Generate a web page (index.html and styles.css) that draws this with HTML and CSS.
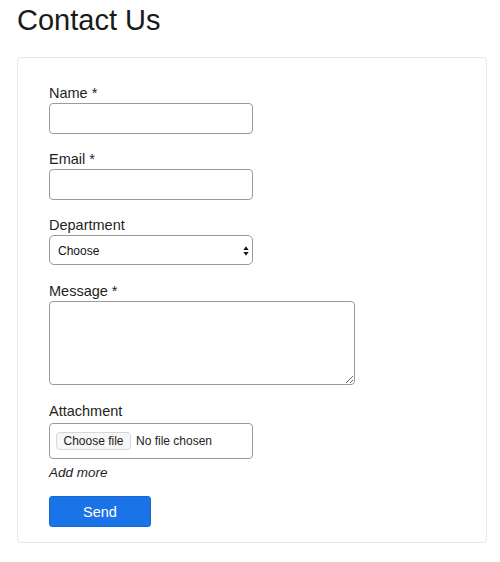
FILE: index.html
```html
<!DOCTYPE html>
<html lang="en">
<head>
<meta charset="utf-8">
<title>Contact Us</title>
<link rel="stylesheet" href="styles.css">
</head>
<body>
<h1 class="title">Contact Us</h1>
<form class="card">
  <div class="group">
    <label class="label" for="name">Name *</label>
    <input class="field" id="name" type="text">
  </div>
  <div class="group">
    <label class="label" for="email">Email *</label>
    <input class="field" id="email" type="email">
  </div>
  <div class="group group-select">
    <label class="label" for="dept">Department</label>
    <div class="select-wrap">
      <select class="select" id="dept">
        <option>Choose</option>
      </select>
      <svg class="select-arrows" width="6" height="10" viewBox="0 0 6 10">
        <path d="M3 0.3 L5.6 4 L0.4 4 Z" fill="#111"/>
        <path d="M3 9.7 L5.6 6 L0.4 6 Z" fill="#111"/>
      </svg>
    </div>
  </div>
  <div class="group group-message">
    <label class="label" for="msg">Message *</label>
    <textarea class="textarea" id="msg"></textarea>
  </div>
  <div class="group group-file">
    <span class="label">Attachment</span>
    <div class="file">
      <span class="file-btn">Choose file</span>
      <span class="file-text">No file chosen</span>
    </div>
    <div class="add-more">Add more</div>
  </div>
  <button class="send" type="button">Send</button>
</form>
</body>
</html>
```
FILE: styles.css
```css
html, body {
  background: #fff;
}
body {
  margin: 0;
  padding: 0 14px 0 17px;
  font-family: "Liberation Sans", Arial, Helvetica, sans-serif;
  color: #1e1e1e;
}
.title {
  margin: 0 0 17px 0;
  font-size: 29px;
  font-weight: normal;
  line-height: 40px;
  color: #1a1a1a;
}
.card {
  box-sizing: border-box;
  width: 470px;
  border: 1px solid #e8e8e8;
  border-radius: 4px;
  padding: 26px 30px 15px 31px;
  display: flex;
  flex-direction: column;
  align-items: flex-start;
}
.group {
  display: flex;
  flex-direction: column;
  align-items: flex-start;
  margin-bottom: 16px;
}
.group-select,
.group-message {
  margin-bottom: 17px;
}
.group-file {
  margin-bottom: 14px;
}
.label {
  display: block;
  font-size: 14.5px;
  line-height: 18px;
  margin-bottom: 1px;
  color: #1e1e1e;
}
.field {
  box-sizing: border-box;
  width: 204px;
  height: 31px;
  margin: 0;
  border: 1px solid #9a9a9a;
  border-radius: 4px;
  background: #fff;
  padding: 0 8px;
  font-family: inherit;
  font-size: 12px;
}
.select-wrap {
  position: relative;
  width: 204px;
  height: 30px;
}
.select {
  box-sizing: border-box;
  width: 204px;
  height: 30px;
  margin: 0;
  -webkit-appearance: none;
  appearance: none;
  border: 1px solid #9a9a9a;
  border-radius: 5px;
  background: #fff;
  padding: 2px 20px 0 8px;
  font-family: inherit;
  font-size: 12px;
  color: #111;
}
.select-arrows {
  position: absolute;
  right: 4px;
  top: 11px;
}
.textarea {
  display: block;
  box-sizing: border-box;
  width: 306px;
  height: 84px;
  margin: 0;
  border: 1px solid #9a9a9a;
  border-radius: 4px;
  background: #fff;
  resize: both;
  font-family: inherit;
  font-size: 12px;
}
.file {
  box-sizing: border-box;
  width: 204px;
  height: 36px;
  margin-top: 2px;
  border: 1px solid #9a9a9a;
  border-radius: 4px;
  padding: 0 6px;
  display: flex;
  align-items: center;
  gap: 5px;
  font-size: 12px;
  color: #222;
}
.file-btn {
  box-sizing: border-box;
  height: 18px;
  width: 75px;
  border: 1px solid #d6d6d6;
  border-radius: 4px;
  background: #f7f7f7;
  display: flex;
  align-items: center;
  justify-content: center;
  font-size: 12px;
  color: #1a1a1a;
}
.file-text {
  font-size: 12px;
  color: #222;
}
.add-more {
  margin-top: 5px;
  font-size: 13.5px;
  line-height: 18px;
  font-style: italic;
  color: #1e1e1e;
}
.send {
  box-sizing: border-box;
  width: 102px;
  height: 31px;
  margin: 0;
  border: 1px solid #176ad6;
  border-radius: 3px;
  background: #1b73e8;
  color: #fff;
  font-family: inherit;
  font-size: 14.5px;
  padding: 0;
}
```
